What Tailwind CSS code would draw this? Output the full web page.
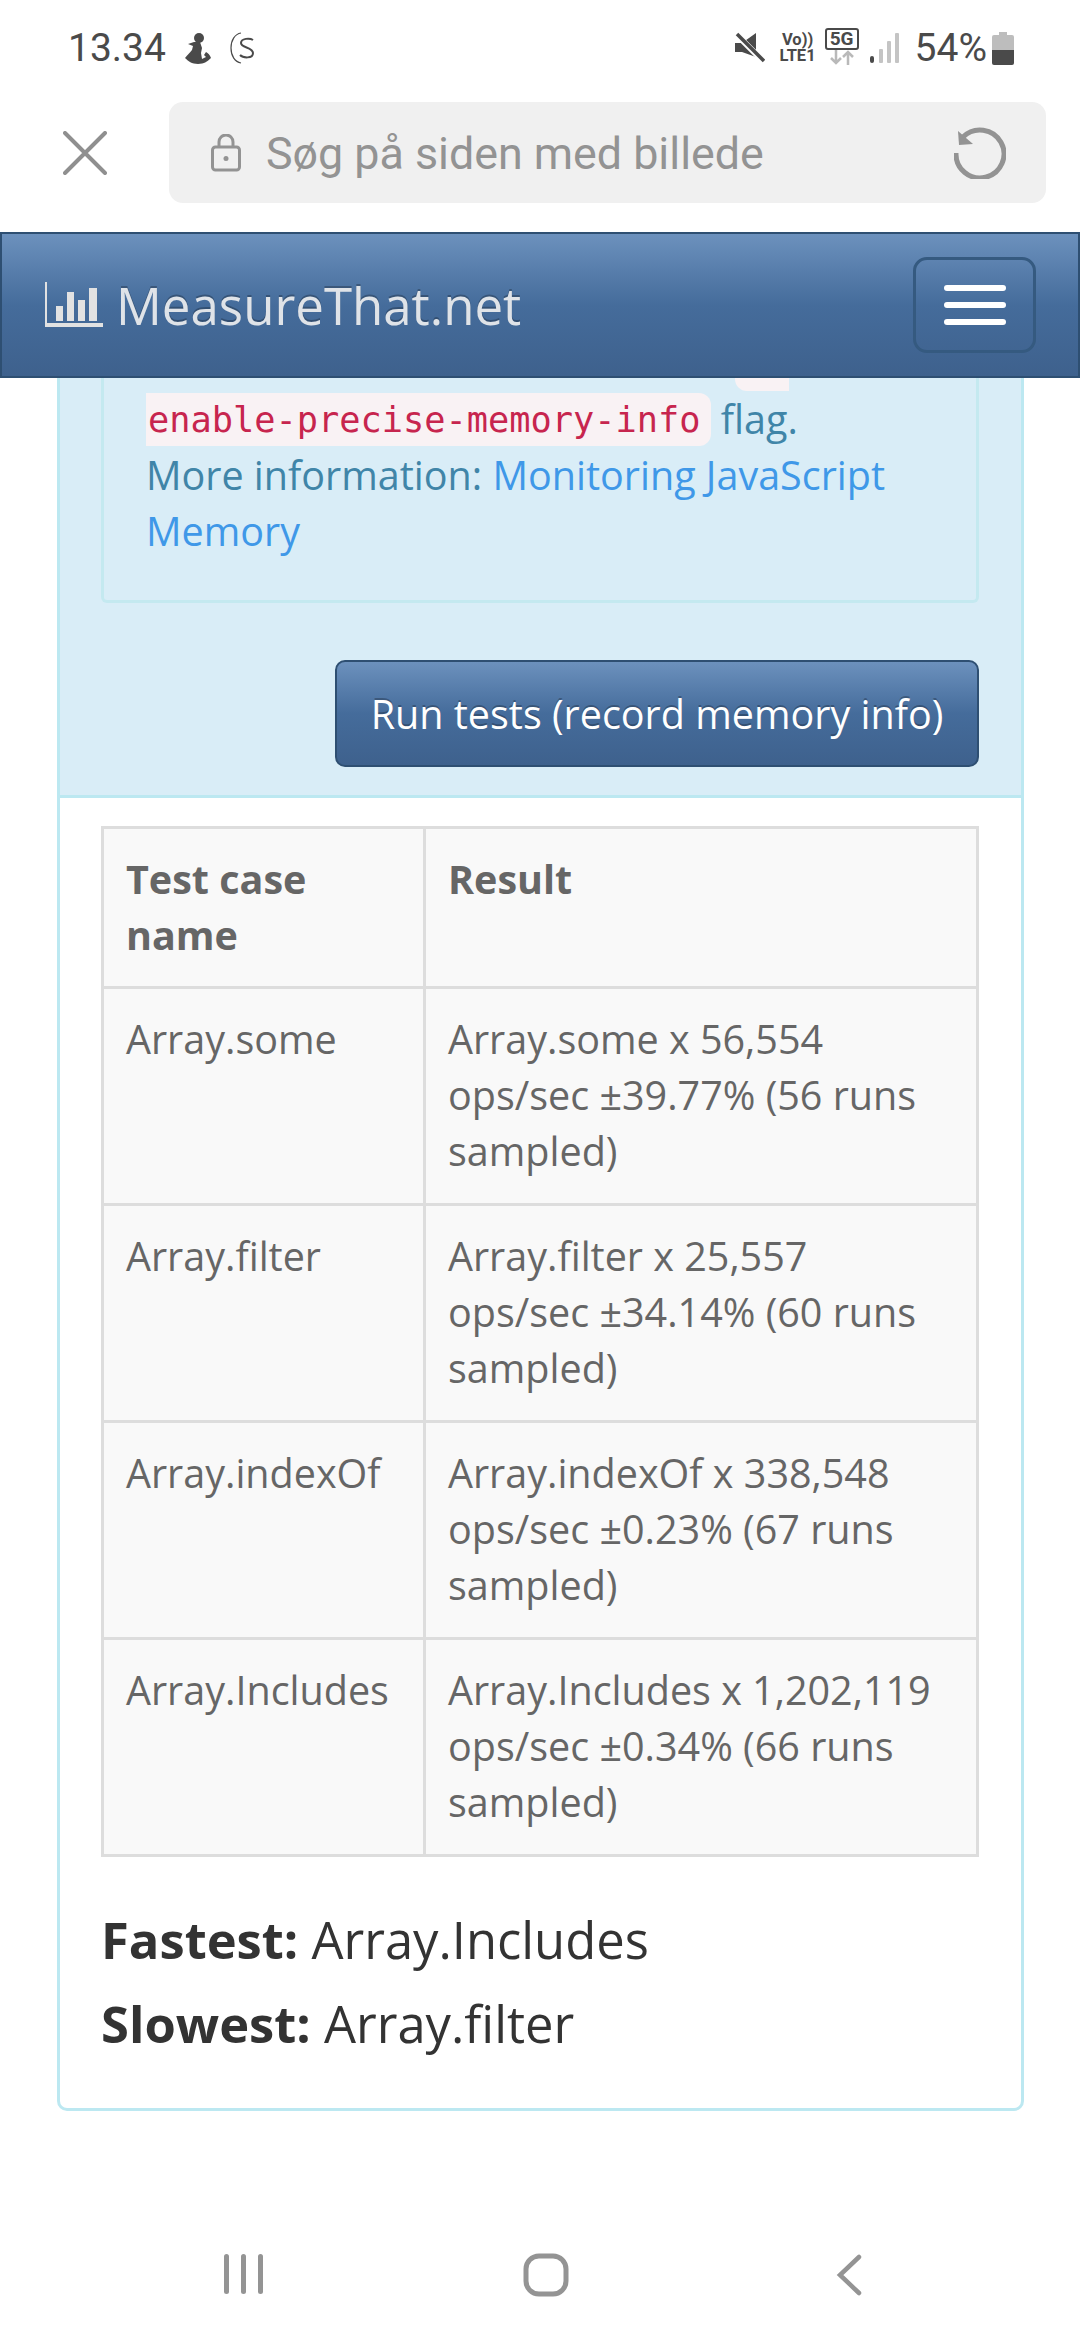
<!DOCTYPE html>
<html lang="en">
<head>
  <meta charset="UTF-8">
  <meta name="viewport" content="width=device-width, initial-scale=1.0">
  <title>MeasureThat.net</title>
  <script src="https://cdn.jsdelivr.net/npm/@tailwindcss/browser@4"></script>
</head>
<body class="bg-white w-[1080px] h-[2340px] overflow-hidden flex flex-col font-['Open_Sans',sans-serif] text-[39.5px] leading-[56px] text-[#333]">
  <!-- status bar -->
  <div class="h-[102px] flex items-start justify-between pl-[68px] pr-[66px] pt-[25px] font-['Roboto',sans-serif] text-[#4a4a4a]">
    <div class="flex items-center h-[46px]">
      <span class="text-[39px] leading-[46px]">13.34</span>
      <svg class="ml-[19px] w-[26px] h-[31px]" viewBox="0 0 26 31" fill="#4a4a4a"><circle cx="14" cy="5" r="5"/><path d="M9 9L3 11l5 2-1 4c-2 3-5 5-7 8 3 3 7 6 13 6s10-3 13-6c-1-3-3-5-5-6l-2 3 2 2-4 2-1-6 1-5-2-6z"/></svg>
      <svg class="ml-[19px] w-[24px] h-[32px]" viewBox="0 0 24 32" fill="none" stroke="#4a4a4a"><path d="M11 1C5 2 1 8 1 16s4 14 10 15" stroke-width="1.200"/><path d="M23 8c-3-2-12-2-12 3s12 4 12 10-10 5-13 2" stroke-width="2"/></svg>
    </div>
    <div class="flex items-center h-[46px]">
      <svg class="w-[30px] h-[32px]" viewBox="0 0 30 32" fill="#4a4a4a"><path d="M0 11h7L21 1v24L7 20H0z"/><path d="M2 3l27 27" stroke="#fff" stroke-width="6"/><path d="M2 2l27 27" stroke="#4a4a4a" stroke-width="3.500"/></svg>
      <div class="ml-[13px] w-[40px] flex flex-col items-center font-bold text-[16.500px] leading-[16px]"><span>Vo))</span><span>LTE1</span></div>
      <div class="ml-[7px] w-[34px] flex flex-col items-center -mt-[4px]">
        <span class="border-2 border-[#4a4a4a] rounded-[3px] w-[34px] h-[22px] text-center font-bold text-[19px] leading-[18px]">5G</span>
        <svg class="w-[26px] h-[15px]" viewBox="0 0 26 15" fill="none" stroke="#b9b9b9" stroke-width="2.500"><path d="M7 0v13M2 8l5 5 5-5M19 15V2M14 7l5-5 5 5"/></svg>
      </div>
      <svg class="ml-[11px] w-[29px] h-[32px]" viewBox="0 0 29 32"><rect x="0" y="24" width="4" height="7" rx="2" fill="#4a4a4a"/><rect x="9" y="17" width="4" height="14" rx="1" fill="#c4c4c4"/><rect x="17" y="9" width="4" height="22" rx="1" fill="#c4c4c4"/><rect x="25" y="1" width="4" height="30" rx="1" fill="#c4c4c4"/></svg>
      <span class="ml-[16px] text-[39px] leading-[46px]">54%</span>
      <svg class="ml-[5px] w-[22px] h-[33px]" viewBox="0 0 22 33"><path d="M7 0h8v3h5a2 2 0 0 1 2 2v13H0V5a2 2 0 0 1 2-2h5z" fill="#bdbdbd"/><path d="M0 18h22v13a2 2 0 0 1-2 2H2a2 2 0 0 1-2-2z" fill="#4a4a4a"/></svg>
    </div>
  </div>

  <!-- browser find bar -->
  <div class="h-[101px] flex items-center font-['Roboto',sans-serif]">
    <svg class="ml-[63px] w-[44px] h-[44px]" viewBox="0 0 44 44" fill="none" stroke="#8f8f8f" stroke-width="4" stroke-linecap="round"><path d="M2 2l40 40M42 2L2 42"/></svg>
    <div class="ml-[62px] w-[877px] h-[101px] rounded-[14px] bg-[#f0f0f0] flex items-center pl-[42px] pr-[40px]">
      <svg class="w-[30px] h-[38px]" viewBox="0 0 30 38" fill="none" stroke="#939393" stroke-width="3"><rect x="1.500" y="13" width="27" height="23" rx="3"/><path d="M8 13V8a7 7 0 0 1 14 0v5"/><circle cx="15" cy="24.500" r="2.500" fill="#939393" stroke="none"/></svg>
      <span class="ml-[25px] flex-1 text-[#939393] text-[44.800px] leading-[56px] pt-[2px]">Søg på siden med billede</span>
      <svg class="w-[52px] h-[52px]" viewBox="0 0 52 52" fill="none" stroke="#939393" stroke-width="5"><path d="M9 10a24 24 0 1 1-7 16"/><path d="M4 4l1 14 14-1z" stroke="none" fill="#939393"/></svg>
    </div>
  </div>

  <!-- navbar -->
  <nav class="mt-[29px] h-[146px] shrink-0 flex items-center justify-between border-2 border-[#2e4f72] bg-gradient-to-b from-[#6c91bd] via-[#456c9b] via-50% to-[#3e618d] pl-[43px] pr-[42px]">
    <div class="flex items-center">
      <svg class="w-[58px] h-[46px]" viewBox="0 0 58 46" fill="#e2e2e2"><path d="M0 0h2v41h56v4H0z"/><rect x="11" y="24" width="7" height="15"/><rect x="22" y="10" width="7" height="29"/><rect x="33" y="18" width="7" height="21"/><rect x="44" y="6" width="8" height="33"/></svg>
      <span class="ml-[13px] text-[51px] leading-[70px] text-[#dfe3e8] [text-shadow:0_-2px_0_rgba(0,0,0,0.25)]">MeasureThat.net</span>
    </div>
    <button class="w-[123px] h-[96px] rounded-[14px] border-[3px] border-[#355a80] flex flex-col items-center justify-center gap-[11px]">
      <span class="block w-[62px] h-[6px] rounded-full bg-white"></span>
      <span class="block w-[62px] h-[6px] rounded-full bg-white"></span>
      <span class="block w-[62px] h-[6px] rounded-full bg-white"></span>
    </button>
  </nav>

  <!-- results panel -->
  <div class="ml-[57px] w-[967px] h-[1733px] shrink-0 border-x-[3px] border-b-[3px] border-[#bce8f1] rounded-b-[10px]">
    <div class="bg-[#d9edf7] border-b-[3px] border-[#bce8f1] pl-[41px] pr-[42px] h-[420px]">
      <div class="border-x-[3px] border-b-[3px] border-[#c4e9f0] rounded-b-[6px] h-[225px] pl-[42px] text-[#4085a8]">
        <div class="h-[13px] w-[54px] ml-[589px] rounded-bl-[12px] bg-[#f9f2f4]"></div>
        <div class="h-[56px]"><code class="font-['DejaVu_Sans_Mono',monospace] text-[35.300px] align-[2px] text-[#c7254e] bg-[#f9f2f4] pl-[2px] pr-[10px] py-[6px] rounded-r-[12px]">enable-precise-memory-info</code> flag.</div>
        <div>More information: <a class="text-[#3f98e8]">Monitoring JavaScript Memory</a></div>
      </div>
      <div class="flex justify-end mt-[57px]">
        <button class="w-[644px] h-[107px] rounded-[10px] border-2 border-[#2e4f72] bg-gradient-to-b from-[#6c91bd] via-[#456c9b] via-50% to-[#3e618d] text-white [text-shadow:0_-2px_0_rgba(0,0,0,0.25)]">Run tests (record memory info)</button>
      </div>
    </div>
    <div class="px-[41px] pt-[28px]">
      <table class="table-fixed w-[878px] border-collapse text-[#666] bg-[#f9f9f9] border-[3px] border-[#ddd]">
        <colgroup><col class="w-[322px]"><col></colgroup>
        <tbody>
          <tr>
            <th class="border-[3px] border-[#ddd] text-left align-top px-[22px] pt-[22px] pb-[23px] font-bold">Test case name</th>
            <th class="border-[3px] border-[#ddd] text-left align-top px-[22px] pt-[22px] pb-[23px] font-bold">Result</th>
          </tr>
          <tr>
            <td class="border-[3px] border-[#ddd] align-top px-[22px] pt-[22px] pb-[24px]">Array.some</td>
            <td class="border-[3px] border-[#ddd] align-top px-[22px] pt-[22px] pb-[24px]">Array.some x 56,554 ops/sec ±39.77% (56 runs sampled)</td>
          </tr>
          <tr>
            <td class="border-[3px] border-[#ddd] align-top px-[22px] pt-[22px] pb-[24px]">Array.filter</td>
            <td class="border-[3px] border-[#ddd] align-top px-[22px] pt-[22px] pb-[24px]">Array.filter x 25,557 ops/sec ±34.14% (60 runs sampled)</td>
          </tr>
          <tr>
            <td class="border-[3px] border-[#ddd] align-top px-[22px] pt-[22px] pb-[24px]">Array.indexOf</td>
            <td class="border-[3px] border-[#ddd] align-top px-[22px] pt-[22px] pb-[24px]">Array.indexOf x 338,548 ops/sec ±0.23% (67 runs sampled)</td>
          </tr>
          <tr>
            <td class="border-[3px] border-[#ddd] align-top px-[22px] pt-[22px] pb-[24px]">Array.Includes</td>
            <td class="border-[3px] border-[#ddd] align-top px-[22px] pt-[22px] pb-[24px]">Array.Includes x 1,202,119 ops/sec ±0.34% (66 runs sampled)</td>
          </tr>
        </tbody>
      </table>
      <div class="mt-[41px] text-[50.700px] leading-[84px] text-[#333]">
        <div><b>Fastest:</b> Array.Includes</div>
        <div><b>Slowest:</b> Array.filter</div>
      </div>
    </div>
  </div>

  <!-- android nav -->
  <div class="mt-auto h-[86px] flex items-start">
    <svg class="ml-[224px] w-[40px] h-[40px]" viewBox="0 0 40 40" fill="#949494"><rect x="0" y="0" width="5" height="40" rx="2.500"/><rect x="17" y="0" width="5" height="40" rx="2.500"/><rect x="34" y="0" width="5" height="40" rx="2.500"/></svg>
    <svg class="ml-[259px] w-[46px] h-[44px] -mt-[1px]" viewBox="0 0 46 44" fill="none" stroke="#949494" stroke-width="5"><rect x="3" y="3" width="40" height="38" rx="13"/></svg>
    <svg class="ml-[267px] w-[26px] h-[42px]" viewBox="0 0 26 42" fill="none" stroke="#949494" stroke-width="4.500" stroke-linecap="round"><path d="M23 3L4 21l19 18"/></svg>
  </div>
</body>
</html>
